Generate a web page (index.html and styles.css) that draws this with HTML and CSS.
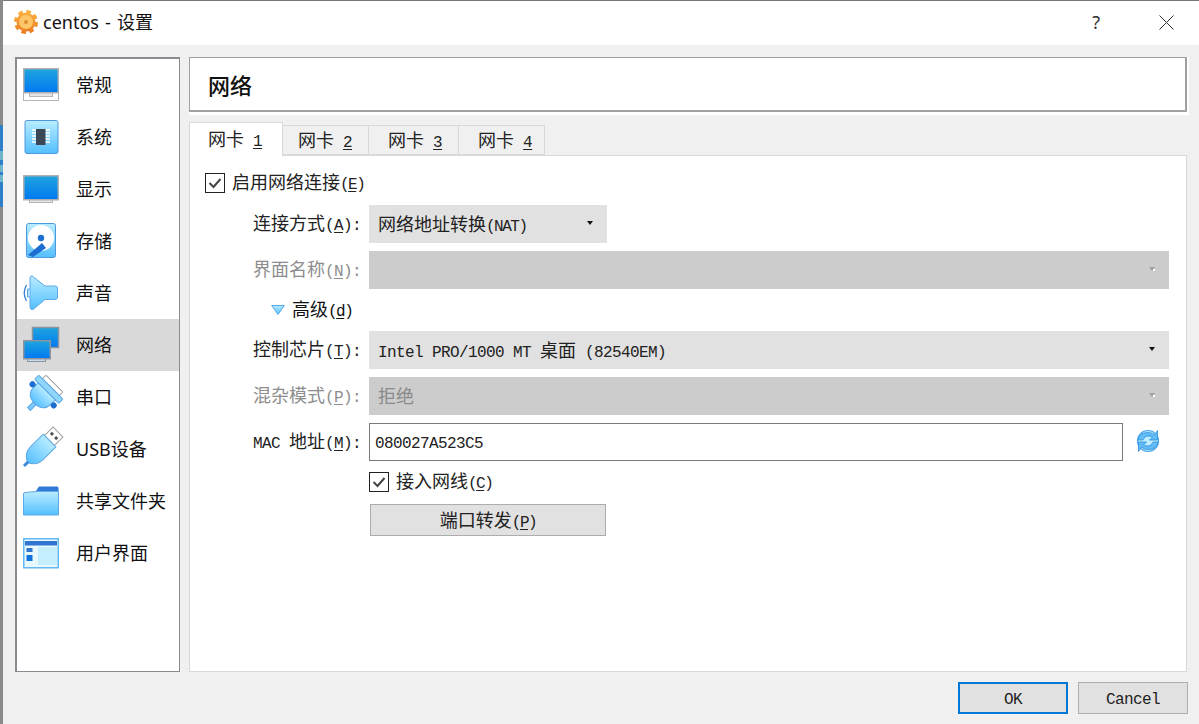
FILE: index.html
```html
<!doctype html>
<html lang="zh-CN">
<head>
<meta charset="utf-8">
<title>centos - 设置</title>
<link rel="stylesheet" href="styles.css">
</head>
<body>
<svg class="defs" width="0" height="0">
    <defs>
        <linearGradient id="screen" x1="0" y1="0" x2="0" y2="1">
            <stop offset="0" stop-color="#1fa5de"/>
            <stop offset="1" stop-color="#0078f2"/>
        </linearGradient>
        <linearGradient id="light" x1="0" y1="0" x2="0" y2="1">
            <stop offset="0" stop-color="#b8ecff"/>
            <stop offset="1" stop-color="#55bfff"/>
        </linearGradient>
        <linearGradient id="cog" x1="0" y1="0" x2="0" y2="1">
            <stop offset="0" stop-color="#fbb040"/>
            <stop offset="1" stop-color="#ee7d1f"/>
        </linearGradient>
    </defs>
</svg>

<div class="backdrop">
    <div class="back-top"></div>
    <div class="back-blue"></div>
    <div class="back-rest"></div>
</div>

<div class="window">
    <div class="titlebar">
        <svg class="app-icon" viewBox="0 0 24 24">
            <circle cx="12" cy="12" r="9.5" fill="url(#cog)"/>
            <circle cx="12" cy="12" r="10" fill="none" stroke="url(#cog)" stroke-width="4" stroke-dasharray="4.4 3.45"/>
            <circle cx="12" cy="12" r="7" fill="#fcc768"/>
            <circle cx="12" cy="12" r="2" fill="#e08a2c"/>
        </svg>
        <span class="title">centos - 设置</span>
        <span class="help">?</span>
        <svg class="close" viewBox="0 0 15 15">
            <path d="M0.5 0.5L14.5 14.5M14.5 0.5L0.5 14.5" fill="none" stroke="#333" stroke-width="1"/>
        </svg>
    </div>

    <div class="content">
        <ul class="sidebar">
            <li class="item">
                <svg class="icon" viewBox="0 0 36 36">
                    <rect x="0.5" y="25.5" width="35" height="8" fill="#fff" stroke="#b5b5b5"/>
                    <rect x="6.5" y="25.5" width="23" height="4" fill="#e4e4e4" stroke="#b5b5b5"/>
                    <rect x="0.75" y="1.75" width="34.5" height="24" fill="url(#screen)" stroke="#b0b0b0" stroke-width="1.5"/>
                </svg>
                <span>常规</span>
            </li>
            <li class="item">
                <svg class="icon" viewBox="0 0 36 36">
                    <rect x="2" y="1.5" width="33" height="33" rx="2" fill="url(#light)" stroke="#4d98dc"/>
                    <path d="M9 11h18M9 14h18M9 17h18M9 20h18M9 23h18" stroke="#fff" stroke-width="1.5"/>
                    <rect x="13" y="10" width="9.500" height="16" fill="#3b4656"/>
                </svg>
                <span>系统</span>
            </li>
            <li class="item">
                <svg class="icon" viewBox="0 0 36 36">
                    <rect x="6.500" y="28.500" width="23" height="3" fill="#e4e4e4" stroke="#b5b5b5"/>
                    <rect x="0.75" y="4.750" width="34.500" height="24" fill="url(#screen)" stroke="#b0b0b0" stroke-width="1.5"/>
                </svg>
                <span>显示</span>
            </li>
            <li class="item">
                <svg class="icon" viewBox="0 0 36 36">
                    <rect x="3.500" y="0.500" width="29" height="34" rx="2" fill="url(#light)" stroke="#4d98dc"/>
                    <circle cx="18" cy="15" r="13" fill="#fff"/>
                    <path d="M5 32L19 20L23 25L10 34Z" fill="#1c6fd0"/>
                    <circle cx="18" cy="15" r="3.200" fill="#1c6fd0"/>
                </svg>
                <span>存储</span>
            </li>
            <li class="item">
                <svg class="icon" viewBox="0 0 36 36">
                    <path d="M3.500 10Q-1 18 3.500 26" fill="none" stroke="#3d86d8" stroke-width="1.400"/>
                    <path d="M9 .8Q7 .8 7 3V32Q7 35 10 34.500L22 24.500H32Q34.500 24.500 34.500 22V13Q34.500 11 32 11H22Z" fill="url(#light)" stroke="#5ea9e6"/>
                    <path d="M7 14H4.500V22H7" fill="#a9dcfb" stroke="#5ea9e6"/>
                </svg>
                <span>声音</span>
            </li>
            <li class="item is-current">
                <svg class="icon" viewBox="0 0 36 36">
                    <rect x="9.500" y="0.500" width="26" height="20" fill="url(#screen)" stroke="#8c959e" stroke-width="1.500"/>
                    <rect x="4.500" y="31.500" width="18" height="3" fill="#c8d9ec" stroke="#8c959e"/>
                    <rect x="0.750" y="13.750" width="26.500" height="18" fill="url(#screen)" stroke="#8c959e" stroke-width="1.500"/>
                </svg>
                <span>网络</span>
            </li>
            <li class="item">
                <svg class="icon" viewBox="0 0 36 36">
                    <g transform="rotate(45 18 18)">
                        <rect x="6" y="-1" width="24" height="5" rx="1" fill="#fff" stroke="#a0a0a0"/>
                        <rect x="1" y="4" width="34" height="6" rx="1" fill="#8fd6fb" stroke="#5ea9e6"/>
                        <path d="M6 10H30V16Q30 27 18 27Q6 27 6 16Z" fill="url(#light)" stroke="#5ea9e6"/>
                        <rect x="16" y="27" width="4" height="8" fill="#7cc8f6" stroke="#5ea9e6"/>
                        <circle cx="3" cy="15" r="3" fill="#1c6fd0"/>
                        <circle cx="33" cy="15" r="3" fill="#1c6fd0"/>
                    </g>
                </svg>
                <span>串口</span>
            </li>
            <li class="item">
                <svg class="icon" viewBox="0 0 36 36">
                    <g transform="rotate(45 18 18)">
                        <rect x="11" y="-6" width="14" height="12" fill="#fff" stroke="#a0a0a0"/>
                        <rect x="13.500" y="-2" width="3" height="3" fill="#555"/>
                        <rect x="19.500" y="-2" width="3" height="3" fill="#555"/>
                        <path d="M9 6H27V24Q27 33 18 37Q9 33 9 24Z" fill="url(#light)" stroke="#5ea9e6"/>
                        <rect x="16.500" y="36" width="3" height="6" fill="#3d86d8"/>
                    </g>
                </svg>
                <span>USB设备</span>
            </li>
            <li class="item">
                <svg class="icon" viewBox="0 0 36 36">
                    <path d="M13 8L16 3.500H34Q35.500 3.500 35.500 5V10H13Z" fill="#3079d6"/>
                    <path d="M.5 11Q.5 9.500 2 9.500L13 8.500H35.500V32H.5Z" fill="url(#light)" stroke="#5ea9e6"/>
                </svg>
                <span>共享文件夹</span>
            </li>
            <li class="item">
                <svg class="icon" viewBox="0 0 36 36">
                    <rect x="0.750" y="3.750" width="34.500" height="29" fill="#e8f8ff" stroke="#62b8f0" stroke-width="1.500"/>
                    <rect x="2" y="6" width="32" height="4.500" fill="#2f74cf"/>
                    <rect x="3.500" y="13" width="6" height="4" fill="#2f74cf"/>
                    <rect x="3.500" y="20" width="6" height="6" fill="#1072de"/>
                    <rect x="15" y="12" width="19" height="18" fill="#c5eeff"/>
                </svg>
                <span>用户界面</span>
            </li>
        </ul>

        <div class="main">
            <div class="header-wrap">
                <div class="header">网络</div>
            </div>

            <div class="tabs">
                <div class="tab is-active">网卡<span class="m"> <u>1</u></span></div>
                <div class="tab">网卡<span class="m"> <u>2</u></span></div>
                <div class="tab">网卡<span class="m"> <u>3</u></span></div>
                <div class="tab">网卡<span class="m"> <u>4</u></span></div>
            </div>

            <div class="pane">
                <div class="check-row enable">
                    <span class="check"><svg viewBox="0 0 18 18"><path d="M3.500 9L7.500 13L14.500 5" fill="none" stroke="#444" stroke-width="2"/></svg></span>
                    <span>启用网络连接<span class="m tight">(<u>E</u>)</span></span>
                </div>

                <div class="row first">
                    <label class="label">连接方式<span class="m">(<u>A</u>):</span></label>
                    <div class="combo short">网络地址转换<span class="m tight">(NAT)</span><i class="arrow"></i></div>
                </div>
                <div class="row">
                    <label class="label is-off">界面名称<span class="m">(<u>N</u>):</span></label>
                    <div class="combo is-off"><i class="arrow"></i></div>
                </div>
                <div class="advanced">
                    <svg class="tri" viewBox="0 0 14 10"><path d="M.7 .5H13.300L7 9.500Z" fill="url(#light)" stroke="#52a8e8"/></svg>
                    <span>高级<span class="m tight">(<u>d</u>)</span></span>
                </div>
                <div class="row">
                    <label class="label">控制芯片<span class="m">(<u>T</u>):</span></label>
                    <div class="combo"><span class="m">Intel PRO/1000 MT </span>桌面<span class="m"> (82540EM)</span><i class="arrow"></i></div>
                </div>
                <div class="row">
                    <label class="label is-off">混杂模式<span class="m">(<u>P</u>):</span></label>
                    <div class="combo is-off">拒绝<i class="arrow"></i></div>
                </div>
                <div class="row">
                    <label class="label"><span class="m">MAC </span>地址<span class="m">(<u>M</u>):</span></label>
                    <div class="field"><span class="m">080027A523C5</span></div>
                    <svg class="refresh" viewBox="0 0 24 24">
                        <circle cx="12" cy="12" r="10.500" fill="#bfeeff" stroke="#4aa5ea" stroke-width="1.200"/>
                        <path d="M2 11Q3 3.500 12 3.500Q16 3.500 18.500 6L21.500 1.500V11H13.500L16.500 8Q14.500 7 12 7Q8 7 7 11Z" fill="#62bdf6" stroke="#2f8fe0" stroke-width=".8"/>
                        <path d="M22 13Q21 20.500 12 20.500Q8 20.500 5.500 18L2.500 22.500V13H10.500L7.500 16Q9.500 17 12 17Q16 17 17 13Z" fill="#62bdf6" stroke="#2f8fe0" stroke-width=".8"/>
                    </svg>
                </div>
                <div class="check-row cable">
                    <span class="check"><svg viewBox="0 0 18 18"><path d="M3.500 9L7.500 13L14.500 5" fill="none" stroke="#444" stroke-width="2"/></svg></span>
                    <span>接入网线<span class="m tight">(<u>C</u>)</span></span>
                </div>
                <div class="btn forward">端口转发<span class="m tight">(<u>P</u>)</span></div>
            </div>
        </div>
    </div>

    <div class="footer">
        <div class="btn action is-default"><span class="m">OK</span></div>
        <div class="btn action"><span class="m">Cancel</span></div>
    </div>
</div>
</body>
</html>
```

FILE: styles.css
```css
html, body {
    margin: 0;
    padding: 0;
    height: 100%;
    overflow: hidden;
}
body {
    display: flex;
    background: #f0f0f0;
    color: #111;
    font-family: "Noto Sans CJK SC", sans-serif;
    font-size: 18px;
    line-height: 24px;
}
.defs {
    position: absolute;
}
/* latin runs are narrow: 9px a character next to 18px CJK */
.m {
    font-family: "Liberation Mono", monospace;
    font-size: 16px;
    letter-spacing: -0.6px;
    white-space: pre;
}
.m.tight {
    letter-spacing: -1.5px;
}
u {
    text-underline-offset: 2px;
}

.backdrop {
    width: 3px;
    display: flex;
    flex-direction: column;
    flex: none;
}
.back-top, .back-rest {
    background: #8a8a8a;
}
.back-top {
    height: 125px;
}
.back-blue {
    height: 82px;
    background: linear-gradient(#2f80c8 0 26px, #6fb4c8 26px 35px, #2f80c8 35px 40px, #6fb4c8 40px 47px, #2f80c8 47px 50px, #6fb4c8 50px 57px, #2f80c8 57px);
}
.back-rest {
    flex: 1;
}

.window {
    flex: 1;
    display: flex;
    flex-direction: column;
    min-width: 0;
    border-top: 1px solid #777;
}
.titlebar {
    height: 44px;
    display: flex;
    align-items: center;
    background: #fff;
    padding-left: 11px;
}
.app-icon {
    width: 24px;
    height: 24px;
    margin-top: -2px;
}
.title {
    margin-left: 5px;
    font-family: "Noto Sans", "Noto Sans CJK SC", sans-serif;
    word-spacing: 1.500px;
    margin-top: -2px;
}
.help {
    margin-left: auto;
    font-family: "Noto Sans", sans-serif;
    color: #333;
    margin-top: -2px;
}
.close {
    width: 15px;
    height: 15px;
    margin: -2px 25px 0 59px;
}

.content {
    flex: 1;
    display: flex;
    gap: 9px;
    padding: 12px 12px 0 12px;
    min-height: 0;
}
.sidebar {
    list-style: none;
    margin: 0;
    padding: 0;
    width: 162px;
    flex: none;
    background: #fff;
    border: 1px solid #8a8a90;
    border-width: 2px 1px 1px 2px;
}
.item {
    height: 52px;
    display: flex;
    align-items: center;
    padding-left: 6px;
    font-family: "Noto Sans", "Noto Sans CJK SC", sans-serif;
}
.item span {
    margin-left: 17px;
}
.is-current {
    background: #d9d9d9;
}
.icon {
    width: 36px;
    height: 36px;
    flex: none;
    overflow: visible;
}

.main {
    flex: 1;
    display: flex;
    flex-direction: column;
    min-width: 0;
}
.header-wrap {
    background: #fff;
    margin-right: -2px;
    height: 58px;
}
.header {
    height: 52px;
    border: 1px solid #a0a0a0;
    border-width: 1px 2px 2px 1px;
    margin-right: 2px;
    padding-left: 18px;
    line-height: 52px;
    font-size: 22px;
    font-weight: 500;
}
.tabs {
    display: flex;
    align-items: flex-end;
    margin-top: 8px;
    height: 32px;
}
.tab {
    height: 28px;
    line-height: 26px;
    padding: 0 16px 0 19px;
    background: #f0f0f0;
    border: 1px solid #d9d9d9;
    border-left: 0;
    color: #222;
}
.tab:nth-child(2) {
    padding-left: 15px;
}
.tab:last-child {
    padding-right: 12px;
}
.tab.is-active {
    height: 33px;
    line-height: 31px;
    padding: 0 20px 0 18px;
    background: #fff;
    border-left: 1px solid #d9d9d9;
    border-bottom: 0;
    margin-bottom: -1px;
    position: relative;
}
.pane {
    flex: 1;
    background: #fff;
    border: 1px solid #d9d9d9;
    padding-top: 17px;
}

.check-row {
    display: flex;
    align-items: center;
    height: 20px;
    color: #222;
}
.check {
    width: 18px;
    height: 18px;
    border: 1px solid #222;
    display: block;
    margin-right: 7px;
    background: #fff;
}
.check svg {
    width: 18px;
    height: 18px;
    display: block;
}
.enable {
    margin-left: 15px;
}
.cable {
    margin: 11px 0 0 179px;
}
.row {
    display: flex;
    margin-top: 8px;
    align-items: center;
    height: 38px;
}
.row.first {
    margin-top: 12px;
}
.label {
    width: 171px;
    margin-right: 8px;
    text-align: right;
    flex: none;
    color: #222;
}
.label.is-off {
    color: #8d8d8d;
}
.combo {
    position: relative;
    width: 800px;
    height: 38px;
    line-height: 37px;
    padding-left: 9px;
    box-sizing: border-box;
    background: #e1e1e1;
    color: #222;
}
.combo.short {
    width: 238px;
}
.combo.is-off {
    background: #cccccc;
    color: #8a8a8a;
}
.arrow {
    position: absolute;
    right: 14px;
    top: 16px;
    width: 0;
    height: 0;
    border: 3px solid transparent;
    border-top: 4px solid #111;
    border-bottom: 0;
}
.is-off .arrow {
    border-top-color: #a0a0a0;
}
.is-off .arrow::after {
    content: "";
    position: absolute;
    left: 1px;
    top: -2px;
    width: 2px;
    height: 2px;
    background: #fff;
}
.advanced {
    display: flex;
    align-items: center;
    height: 26px;
    margin: 8px 0 0 81px;
}
.tri {
    width: 14px;
    height: 10px;
    margin-right: 7px;
}
.field {
    width: 754px;
    height: 38px;
    box-sizing: border-box;
    border: 1px solid #7a7a7a;
    padding-left: 5px;
    line-height: 33px;
    color: #222;
}
.refresh {
    width: 24px;
    height: 24px;
    margin: -2px 0 0 13px;
}
.btn {
    box-sizing: border-box;
    background: #e1e1e1;
    border: 1px solid #adadad;
    text-align: center;
    color: #222;
}
.forward {
    width: 236px;
    height: 32px;
    line-height: 29px;
    margin: 12px 0 0 180px;
}
.footer {
    display: flex;
    justify-content: flex-end;
    gap: 10px;
    height: 52px;
    box-sizing: border-box;
    padding: 10px 11px 0 0;
}
.action {
    width: 110px;
    height: 32px;
    line-height: 26px;
}
.is-default {
    border: 2px solid #0078d7;
    line-height: 24px;
}
```
